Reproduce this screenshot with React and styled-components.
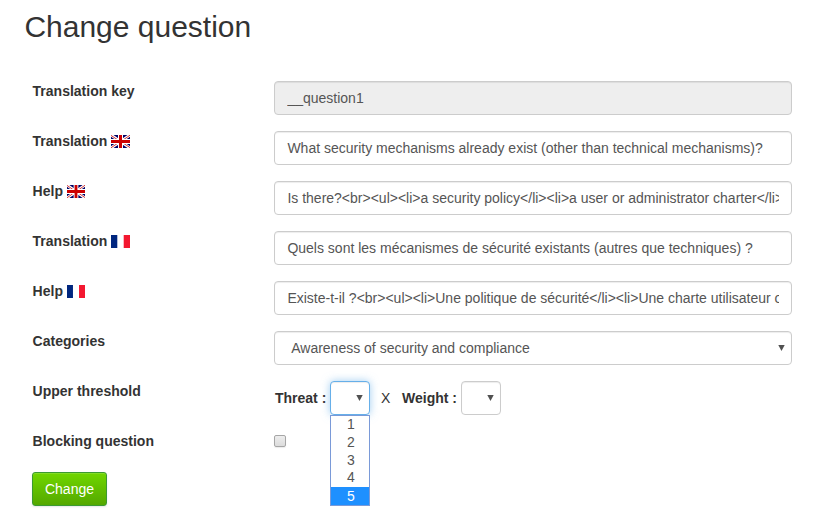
import React from 'react';
import styled, { createGlobalStyle, css } from 'styled-components';

const GlobalStyle = createGlobalStyle`
  *, *::before, *::after { box-sizing: border-box; }
  body {
    margin: 0;
    background: #fff;
    color: #333;
    font: 14px/20px "Liberation Sans", Arial, sans-serif;
    overflow: hidden;
  }
`;

const Page = styled.main`
  width: 823px;
  height: 524px;
  padding: 10px 31px 0 24px;
  overflow: hidden;
`;

const Title = styled.h1`
  margin: 0 0 38px;
  padding-left: 0.4px;
  font-size: 30px;
  font-weight: 400;
  line-height: 33px;
`;

const Form = styled.form`
  display: flex;
  flex-direction: column;
  gap: 16px;
  padding-left: 8px;
`;

const Row = styled.div`
  display: grid;
  grid-template-columns: 242px 518px;
  height: ${(p) => p.$height || 34}px;
`;

const Label = styled.label`
  display: flex;
  align-items: center;
  height: 20px;
  padding-left: 0.6px;
  font-weight: 700;
`;

const LabelText = styled.span`
  width: ${(p) => (p.$width ? `${p.$width}px` : 'auto')};
  white-space: nowrap;
`;

const Flag = styled.svg`
  display: block;
  width: ${(p) => p.$width || 19}px;
  height: 13px;
  margin-top: 1px;
`;

const control = css`
  height: 34px;
  border: 1px solid #ccc;
  border-radius: 4px;
  background: #fff;
  box-shadow: inset 0 1px 1px rgba(0, 0, 0, 0.075);
  color: #555;
  font: 14px/20px "Liberation Sans", Arial, sans-serif;
  outline: none;
`;

const TextInput = styled.input`
  ${control}
  width: 100%;
  padding: 6px 12px 6px 12.4px;
  &:read-only { background: #eee; }
`;

const SelectBox = styled.div`
  ${control}
  position: relative;
  display: flex;
  align-items: center;
  justify-content: space-between;
  width: ${(p) => p.$width || '100%'};
  padding: 0 6px 0 16.2px;
  ${(p) => p.$small && css`
    justify-content: flex-end;
    padding: 0 6px;
  `}
  ${(p) => p.$open && css`
    border-color: #66afe9;
    box-shadow: inset 0 1px 1px rgba(0, 0, 0, 0.075), 0 0 8px rgba(102, 175, 233, 0.6);
  `}
`;

const Arrow = styled.svg`
  display: block;
  width: 7px;
  height: 6px;
  fill: #505050;
`;

const Menu = styled.ul`
  position: absolute;
  top: 33px;
  left: -1px;
  width: 40px;
  height: 91px;
  margin: 0;
  padding: 0;
  display: grid;
  grid-template-rows: 18px 18px 18px 17px 18px;
  border: 1px solid #7a9ad8;
  background: #fff;
  list-style: none;
`;

const Option = styled.li`
  padding-left: 2px;
  line-height: ${(p) => p.$line}px;
  text-align: center;
  color: ${(p) => (p.$active ? '#fff' : '#555')};
  background: ${(p) => (p.$active ? '#1e90ff' : '#fff')};
`;

const Threshold = styled.div`
  display: flex;
  align-items: center;
  padding-left: 1px;
`;

const Caption = styled.span`
  width: ${(p) => p.$width}px;
  font-weight: 700;
  white-space: nowrap;
`;

const Times = styled.span`
  width: 32px;
  padding-left: 11px;
`;

const Checkbox = styled.input`
  appearance: none;
  width: 12px;
  height: 12px;
  margin: 4px 0 0;
  border: 1px solid #a6a6a6;
  border-radius: 2px;
  background: linear-gradient(#ededed, #dcdcdc);
  box-shadow: 0 1px 1px rgba(0, 0, 0, 0.08);
`;

const SubmitButton = styled.button`
  align-self: flex-start;
  width: 75px;
  height: 34px;
  padding: 0;
  border: 1px solid #3b9a32;
  border-radius: 3px;
  background: linear-gradient(#70d600, #54a800);
  box-shadow: inset 0 1px 0 rgba(255, 255, 255, 0.15), 0 1px 2px rgba(0, 0, 0, 0.1);
  color: #fff;
  font: 14px/20px "Liberation Sans", Arial, sans-serif;
`;

function UkFlag({ width }) {
  return (
    <Flag $width={width} viewBox="0 0 19 13" preserveAspectRatio="none">
      <path fill="#006" d="M0 0h19v13H0z" />
      <path stroke="#fff" strokeWidth="2.8" d="M0 0l19 13M19 0L0 13" />
      <path stroke="#c00" strokeWidth=".8" d="M0 .4l7 4.6M19 .2l-7 4.8M0 12.8L7 8M19 12.6L12 8" />
      <path fill="#fff" d="M7 0h5v13H7zM0 4h19v5H0z" />
      <path fill="#c00" d="M8 0h3v13H8zM0 5h19v3H0z" />
    </Flag>
  );
}

function FrenchFlag({ width }) {
  return (
    <Flag $width={width} viewBox="0 0 19 13" preserveAspectRatio="none">
      <path fill="#fff" d="M0 0h19v13H0z" />
      <path fill="#00267f" d="M0 0h6.3v13H0z" />
      <path fill="#f31830" d="M12.7 0H19v13h-6.3z" />
    </Flag>
  );
}

function DownArrow() {
  return <Arrow viewBox="0 0 7 6"><path d="M.3 0h6.4L3.5 6z" /></Arrow>;
}

const fields = [
  { label: 'Translation key', value: '__question1', readOnly: true },
  { label: 'Translation', width: 78.4, flag: UkFlag, value: 'What security mechanisms already exist (other than technical mechanisms)?' },
  { label: 'Help', width: 34.4, flag: UkFlag, flagWidth: 18, value: 'Is there?<br><ul><li>a security policy</li><li>a user or administrator charter</li></ul>' },
  { label: 'Translation', width: 78.4, flag: FrenchFlag, value: 'Quels sont les mécanismes de sécurité existants (autres que techniques) ?' },
  { label: 'Help', width: 34.4, flag: FrenchFlag, flagWidth: 18, value: 'Existe-t-il ?<br><ul><li>Une politique de sécurité</li><li>Une charte utilisateur ou administrateur</li></ul>' },
];

const levels = [
  { value: 1, line: 16 },
  { value: 2, line: 16 },
  { value: 3, line: 16 },
  { value: 4, line: 14 },
  { value: 5, line: 18, active: true },
];

export default function App() {
  return (
    <>
      <GlobalStyle />
      <Page>
        <Title>Change question</Title>
        <Form>
          {fields.map(({ label, width, flag: Icon, flagWidth, value, readOnly }, i) => (
            <Row key={i}>
              <Label>
                <LabelText $width={width}>{label}</LabelText>
                {Icon && <Icon width={flagWidth} />}
              </Label>
              <TextInput defaultValue={value} readOnly={readOnly} />
            </Row>
          ))}
          <Row>
            <Label>Categories</Label>
            <SelectBox>Awareness of security and compliance<DownArrow /></SelectBox>
          </Row>
          <Row>
            <Label>Upper threshold</Label>
            <Threshold>
              <Caption $width={55}>Threat :</Caption>
              <SelectBox $small $open $width="40px">
                <DownArrow />
                <Menu>
                  {levels.map(({ value, line, active }) => (
                    <Option key={value} $line={line} $active={active}>{value}</Option>
                  ))}
                </Menu>
              </SelectBox>
              <Times>X</Times>
              <Caption $width={59}>Weight :</Caption>
              <SelectBox $small $width="40px"><DownArrow /></SelectBox>
            </Threshold>
          </Row>
          <Row $height={25}>
            <Label>Blocking question</Label>
            <Checkbox type="checkbox" />
          </Row>
          <SubmitButton type="button">Change</SubmitButton>
        </Form>
      </Page>
    </>
  );
}
